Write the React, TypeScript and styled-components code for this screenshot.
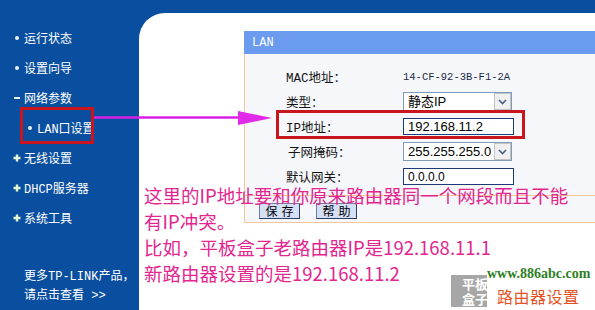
import React from 'react';
import styled, { createGlobalStyle } from 'styled-components';

const BLUE = '#0a4f9f';
const ORANGE = '#f2c79c';
const RED = '#c9161e';
const MAGENTA = '#e3268f';

const GlobalStyle = createGlobalStyle`
  html, body {
    margin: 0;
    padding: 0;
    background: ${BLUE};
  }
  body {
    font-family: "Liberation Mono", "Noto Sans CJK SC", monospace;
    font-size: 12px;
  }
  * {
    box-sizing: border-box;
  }
`;

const menu = [
  { label: '运行状态', mark: 'dot' },
  { label: '设置向导', mark: 'dot' },
  { label: '网络参数', mark: 'dash' },
  { label: 'LAN口设置', mark: 'dot', sub: true },
  { label: '无线设置', mark: 'plus' },
  { label: 'DHCP服务器', mark: 'plus' },
  { label: '系统工具', mark: 'plus' },
];

const Mark = ({ kind }: { kind: string }) => {
  if (kind === 'dash') return <Dash />;
  if (kind === 'plus')
    return (
      <svg width="8" height="8" viewBox="0 0 8 8">
        <path d="M4 0.5V7.5M0.5 4H7.5" stroke="#e4f7d2" strokeWidth="2.4" />
      </svg>
    );
  return <Dot />;
};

const App = () => {
  return (
    <Page>
      <GlobalStyle />
      <Sidebar>
        {menu.map((item) => (
          <MenuItem key={item.label} $sub={item.sub}>
            <MarkBox>
              <Mark kind={item.mark} />
            </MarkBox>
            {item.label}
          </MenuItem>
        ))}
        <Footer>
          <div>更多TP-LINK产品，</div>
          <div>请点击查看 &gt;&gt;</div>
        </Footer>
      </Sidebar>

      <Main>
        <Canvas>
          <Panel>
            <PanelHeader>LAN</PanelHeader>
            <Form>
              <Label>MAC地址：</Label>
              <MacValue>14-CF-92-3B-F1-2A</MacValue>

              <Label>类型：</Label>
              <Select>
                <SelectText>静态IP</SelectText>
                <SelectArrow>
                  <svg width="9" height="6" viewBox="0 0 9 6">
                    <path d="M1 1L4.5 4.5L8 1" stroke="#4c5f83" strokeWidth="1.6" fill="none" />
                  </svg>
                </SelectArrow>
              </Select>

              <Label>IP地址：</Label>
              <TextField readOnly value="192.168.11.2" />

              <Label $indent>子网掩码：</Label>
              <Select>
                <SelectText>255.255.255.0</SelectText>
                <SelectArrow>
                  <svg width="9" height="6" viewBox="0 0 9 6">
                    <path d="M1 1L4.5 4.5L8 1" stroke="#4c5f83" strokeWidth="1.6" fill="none" />
                  </svg>
                </SelectArrow>
              </Select>

              <Label>默认网关：</Label>
              <TextField readOnly value="0.0.0.0" $small />
            </Form>
            <ButtonRow>
              <Button>保存</Button>
              <Button>帮助</Button>
            </ButtonRow>
          </Panel>
        </Canvas>
      </Main>

      {/* annotations drawn over the screenshot */}
      <SidebarMark />
      <IpMark />
      <Arrow width="180" height="15" viewBox="0 0 180 15">
        <line x1="0" y1="6.5" x2="150" y2="6.5" stroke="#d81fe6" strokeWidth="2.6" />
        <polygon points="144,0 178,7 144,14" fill="#e02ae8" />
      </Arrow>
      <Note>
        <div>这里的IP地址要和你原来路由器同一个网段而且不能</div>
        <div>有IP冲突。</div>
        <div>比如，平板盒子老路由器IP是192.168.11.1</div>
        <div>新路由器设置的是192.168.11.2</div>
      </Note>
      <GrayTag>
        <div>平板</div>
        <div>盒子</div>
      </GrayTag>
      <Logo>
        <Site>www.886abc.com</Site>
        <LogoTitle>路由器设置</LogoTitle>
      </Logo>
    </Page>
  );
};

export default App;

const Page = styled.div`
  position: relative;
  width: 595px;
  height: 310px;
  overflow: hidden;
  display: grid;
  grid-template-columns: 139px 1fr;
  background: ${BLUE};
`;

const Sidebar = styled.nav`
  padding-top: 23px;
  color: #fff;
  display: flex;
  flex-direction: column;
`;

const MenuItem = styled.div<{ $sub?: boolean }>`
  height: 30px;
  display: flex;
  align-items: center;
  padding-left: ${({ $sub }) => ($sub ? 24 : 11)}px;
  white-space: nowrap;
`;

const MarkBox = styled.span`
  width: 11px;
  margin-right: 2px;
  display: inline-flex;
  align-items: center;
  justify-content: center;
`;

const Dot = styled.span`
  width: 4px;
  height: 4px;
  border-radius: 50%;
  background: #e8f4ec;
`;

const Dash = styled.span`
  width: 6px;
  height: 2px;
  background: #e8f4ec;
`;

const Footer = styled.div`
  margin-top: 35px;
  padding-left: 24px;
  line-height: 19px;
  white-space: nowrap;
`;

const Main = styled.main`
  padding-top: 13px;
  display: flex;
`;

const Canvas = styled.div`
  flex: 1;
  background: #fff;
  border-top-left-radius: 26px;
  padding: 18px 0 0 105px;
`;

const Panel = styled.section`
  background: #f5f7fa;
  border-left: 1px solid ${ORANGE};
  border-bottom: 1px solid ${ORANGE};
`;

const PanelHeader = styled.div`
  height: 23px;
  margin-left: -1px;
  padding-left: 8px;
  display: flex;
  align-items: center;
  background: #6a9bef;
  color: #fff;
`;

const Form = styled.div`
  display: grid;
  grid-template-columns: 117px auto;
  grid-auto-rows: 25px;
  align-items: center;
  padding: 10px 0 0 41px;
  border-bottom: 1px solid ${ORANGE};
  padding-bottom: 6px;
`;

const Label = styled.span<{ $indent?: boolean }>`
  padding-left: ${({ $indent }) => ($indent ? 2 : 0)}px;
  color: #141414;
  font-size: 12.5px;
`;

const MacValue = styled.span`
  font-size: 10.5px;
  color: #1b2a48;
`;

const Select = styled.div`
  width: 109px;
  height: 19px;
  display: flex;
  border: 1px solid #7f9db9;
  background: #fff;
`;

const SelectText = styled.span`
  flex: 1;
  padding-left: 4px;
  line-height: 17px;
  font-family: "Liberation Sans", "Noto Sans CJK SC", sans-serif;
  font-size: 13px;
  color: #000;
`;

const SelectArrow = styled.span`
  width: 17px;
  display: flex;
  align-items: center;
  justify-content: center;
  border: 1px solid #c3c3c3;
  background: #f0f0f0;
`;

const TextField = styled.input<{ $small?: boolean }>`
  width: 111px;
  height: 17px;
  margin: 0;
  padding: 0 4px;
  border: 1px solid #1d3a74;
  background: #fff;
  font-family: "Liberation Sans", sans-serif;
  font-size: ${({ $small }) => ($small ? 12 : 13)}px;
  color: #000;
  outline: none;
`;

const ButtonRow = styled.div`
  display: flex;
  gap: 16px;
  padding: 7px 0 3px 14px;
`;

const Button = styled.button`
  width: 41px;
  height: 16px;
  padding: 0;
  border: 1px solid;
  border-color: #6d7f9f #2c3f60 #2c3f60 #6d7f9f;
  background: #d5dff5;
  font-family: "Noto Sans CJK SC", sans-serif;
  font-size: 12px;
  line-height: 14px;
  letter-spacing: 4px;
  text-indent: 4px;
  color: #000;
`;

const SidebarMark = styled.div`
  position: absolute;
  left: 20px;
  top: 107px;
  width: 74px;
  height: 37px;
  border: 3px solid ${RED};
`;

const IpMark = styled.div`
  position: absolute;
  left: 276px;
  top: 110px;
  width: 249px;
  height: 29px;
  border: 3px solid ${RED};
`;

const Arrow = styled.svg`
  position: absolute;
  left: 94px;
  top: 111px;
`;

const Note = styled.div`
  position: absolute;
  left: 144px;
  top: 182px;
  font-family: "Noto Sans CJK SC", sans-serif;
  font-size: 18.5px;
  line-height: 26px;
  color: ${MAGENTA};
  white-space: nowrap;
`;

const GrayTag = styled.div`
  position: absolute;
  left: 451px;
  top: 275px;
  width: 36px;
  height: 32px;
  padding: 1px 0 0 11px;
  overflow: hidden;
  background: #a6a6a6;
  color: #fff;
  font-family: "Noto Sans CJK SC", sans-serif;
  font-weight: 700;
  font-size: 13px;
  line-height: 15px;
  white-space: nowrap;
`;

const Logo = styled.div`
  position: absolute;
  left: 487px;
  top: 265px;
  width: 108px;
  height: 45px;
  background: #fff;
`;

const Site = styled.div`
  font-family: "Liberation Serif", serif;
  font-weight: 700;
  font-size: 14px;
  line-height: 18px;
  color: #2f7f24;
`;

const LogoTitle = styled.div`
  margin: 3px 0 0 10px;
  font-family: "Noto Sans CJK SC", sans-serif;
  font-size: 16px;
  line-height: 20px;
  letter-spacing: 0.5px;
  color: #e5521f;
`;
